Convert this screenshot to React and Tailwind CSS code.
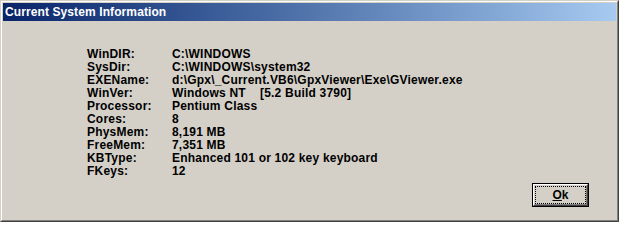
const rows = [
  ['WinDIR:', 'C:\\WINDOWS'],
  ['SysDir:', 'C:\\WINDOWS\\system32'],
  ['EXEName:', 'd:\\Gpx\\_Current.VB6\\GpxViewer\\Exe\\GViewer.exe'],
  ['WinVer:', 'Windows NT    [5.2 Build 3790]'],
  ['Processor:', 'Pentium Class'],
  ['Cores:', '8'],
  ['PhysMem:', '8,191 MB'],
  ['FreeMem:', '7,351 MB'],
  ['KBType:', 'Enhanced 101 or 102 key keyboard'],
  ['FKeys:', '12'],
]

export default function App() {
  return (
    <div className="w-[619px] h-[222px] border border-t-[#d4d0c8] border-l-[#d4d0c8] border-r-[#404040] border-b-[#404040]">
      <div className="h-full border border-t-white border-l-white border-r-[#808080] border-b-[#808080] bg-[#d4d0c8] p-px flex flex-col">
        {/* Title bar */}
        <div className="h-[18px] shrink-0 flex items-center pl-[2px] bg-gradient-to-r from-[#0a246a] to-[#a6caf0]">
          <span className="text-white font-bold text-[12px] leading-none tracking-[0.1px] font-['Liberation_Sans',Arial,sans-serif]">
            Current System Information
          </span>
        </div>

        {/* Body */}
        <div className="flex-1 flex min-h-0">
          <div className="pt-[27px] pl-[84px] font-['Liberation_Sans',Arial,sans-serif] text-[12px] font-bold leading-[13px] tracking-[0.2px] text-black">
            {rows.map(([label, value]) => (
              <div key={label} className="flex">
                <span className="w-[85px] shrink-0">{label}</span>
                <span className="whitespace-pre">{value}</span>
              </div>
            ))}
          </div>
          <div className="flex-1 flex justify-end items-end pr-[27px] pb-[12px]">
            <button className="w-[57px] h-[24px] border border-black bg-[#d4d0c8]">
              <div className="h-full border border-t-white border-l-white border-r-[#404040] border-b-[#404040]">
                <div className="h-full border border-t-[#d4d0c8] border-l-[#d4d0c8] border-r-[#808080] border-b-[#808080]">
                  <div className="h-full border border-dotted border-black flex items-center justify-center font-['Liberation_Sans',Arial,sans-serif] text-[12px] font-bold text-black">
                    <span><span className="underline">O</span>k</span>
                  </div>
                </div>
              </div>
            </button>
          </div>
        </div>
      </div>
    </div>
  )
}
